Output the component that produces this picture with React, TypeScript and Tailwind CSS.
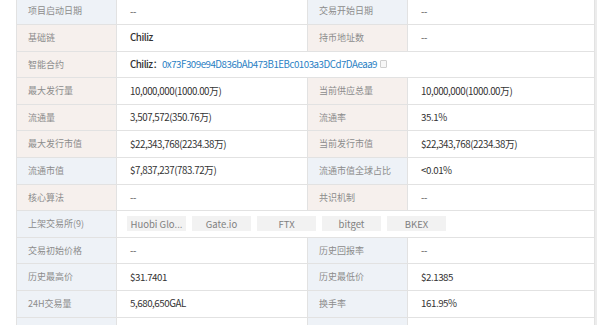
import React from "react";

type Cell = { label: string; value: React.ReactNode; bg: "b" | "p" };

const bgClass = (b: "b" | "p") => (b === "b" ? "bg-[#eef2f7]" : "bg-[#f6f0ed]");

function Label({ text, bg }: { text: string; bg: "b" | "p" }) {
  return (
    <div className={`w-[100px] shrink-0 h-full flex items-center pl-[11px] text-[9px] text-[#8c8c8c] border-r border-[#e2e2e2] ${bgClass(bg)}`}>
      {text}
    </div>
  );
}

function Value({ children, w }: { children: React.ReactNode; w: string }) {
  return (
    <div className={`${w} h-full flex items-center pl-[13px] text-[9.75px] tracking-[-0.45px] text-[#333] border-r border-[#e2e2e2]`}>
      {children}
    </div>
  );
}

function Row({ left, right }: { left: Cell; right: Cell }) {
  return (
    <div className="flex h-[26.6px] border-b border-[#e2e2e2]">
      <Label text={left.label} bg={left.bg} />
      <Value w="w-[191px] shrink-0">{left.value}</Value>
      <Label text={right.label} bg={right.bg} />
      <Value w="flex-1">{right.value}</Value>
    </div>
  );
}

const dash = <span className="text-[#555]">--</span>;

export default function App() {
  const rowsTop: [Cell, Cell][] = [
    [
      { label: "项目启动日期", value: dash, bg: "b" },
      { label: "交易开始日期", value: dash, bg: "b" },
    ],
    [
      { label: "基础链", value: <span className="font-medium">Chiliz</span>, bg: "p" },
      { label: "持币地址数", value: dash, bg: "p" },
    ],
  ];
  const rowsMid: [Cell, Cell][] = [
    [
      { label: "最大发行量", value: "10,000,000(1000.00万)", bg: "p" },
      { label: "当前供应总量", value: "10,000,000(1000.00万)", bg: "p" },
    ],
    [
      { label: "流通量", value: "3,507,572(350.76万)", bg: "p" },
      { label: "流通率", value: "35.1%", bg: "p" },
    ],
    [
      { label: "最大发行市值", value: "$22,343,768(2234.38万)", bg: "p" },
      { label: "当前发行市值", value: "$22,343,768(2234.38万)", bg: "p" },
    ],
    [
      { label: "流通市值", value: "$7,837,237(783.72万)", bg: "b" },
      { label: "流通市值全球占比", value: "<0.01%", bg: "b" },
    ],
    [
      { label: "核心算法", value: dash, bg: "p" },
      { label: "共识机制", value: dash, bg: "p" },
    ],
  ];
  const rowsBottom: [Cell, Cell][] = [
    [
      { label: "交易初始价格", value: dash, bg: "b" },
      { label: "历史回报率", value: dash, bg: "b" },
    ],
    [
      { label: "历史最高价", value: "$31.7401", bg: "b" },
      { label: "历史最低价", value: "$2.1385", bg: "b" },
    ],
    [
      { label: "24H交易量", value: "5,680,650GAL", bg: "b" },
      { label: "换手率", value: "161.95%", bg: "b" },
    ],
  ];
  const exchanges = ["Huobi Glo...", "Gate.io", "FTX", "bitget", "BKEX"];

  return (
    <div
      className="w-[600px] h-[325px] overflow-hidden bg-white"
      style={{ fontFamily: '"Noto Sans CJK SC", "Noto Sans", sans-serif' }}
    >
      <div className="ml-[16px] w-[581px] mt-[-1.6px] border-l border-[#e2e2e2] border-r-[2px] border-r-[#ececec]">
        {rowsTop.map(([l, r], i) => (
          <Row key={i} left={l} right={r} />
        ))}
        <div className="flex h-[26.6px] border-b border-[#e2e2e2]">
          <Label text="智能合约" bg="p" />
          <div className="flex-1 h-full flex items-center pl-[13px] text-[9.75px] tracking-[-0.5px] text-[#333] border-r border-[#e2e2e2]">
            <span className="font-medium">Chiliz：</span>
            <span className="text-[#2b7fc4]">0x73F309e94D836bAb473B1EBc0103a3DCd7DAeaa9</span>
            <span className="ml-[3px] inline-block w-[7px] h-[8px] border border-[#cfcfcf] bg-[#f7f7f7] rounded-[1px]" />
          </div>
        </div>
        {rowsMid.map(([l, r], i) => (
          <Row key={i} left={l} right={r} />
        ))}
        <div className="flex h-[26.6px] border-b border-[#e2e2e2]">
          <Label text="上架交易所(9)" bg="b" />
          <div className="flex-1 h-full flex items-center pl-[10px] gap-[6px] border-r border-[#e2e2e2]">
            {exchanges.map((e) => (
              <div
                key={e}
                className="w-[59px] h-[15px] bg-[#f2f2f2] flex items-center justify-center text-[9.5px] text-[#808080]"
              >
                {e}
              </div>
            ))}
          </div>
        </div>
        {rowsBottom.map(([l, r], i) => (
          <Row key={i} left={l} right={r} />
        ))}
        <div className="flex h-[26.6px]">
          <Label text="" bg="b" />
          <Value w="w-[191px] shrink-0">{""}</Value>
          <Label text="" bg="b" />
          <Value w="flex-1">{""}</Value>
        </div>
      </div>
    </div>
  );
}
